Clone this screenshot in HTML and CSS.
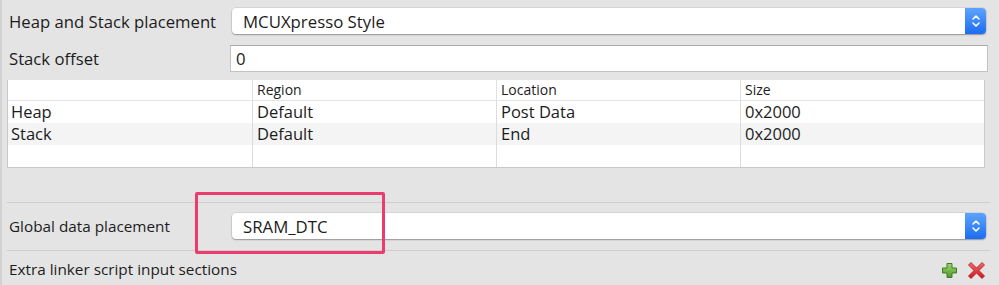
FILE: index.html
```html
<!DOCTYPE html>
<html>
<head>
<meta charset="utf-8">
<link rel="stylesheet" href="styles.css">
</head>
<body>
<div class="panel">
  <div class="row row-combo">
    <div class="label">Heap and Stack placement</div>
    <div class="combo">
      <span class="combo-text">MCUXpresso Style</span>
      <span class="stepper"><svg width="10" height="16" viewBox="0 0 10 16"><path d="M2 6 L5 3 L8 6 M2 10 L5 13 L8 10" fill="none" stroke="#fff" stroke-width="1.6" stroke-linecap="round" stroke-linejoin="round"/></svg></span>
    </div>
  </div>
  <div class="row row-field">
    <div class="label">Stack offset</div>
    <div class="field">0</div>
  </div>
  <div class="table">
    <div class="tr th">
      <div class="td"></div><div class="td">Region</div><div class="td">Location</div><div class="td">Size</div>
    </div>
    <div class="tr">
      <div class="td">Heap</div><div class="td">Default</div><div class="td">Post Data</div><div class="td">0x2000</div>
    </div>
    <div class="tr alt">
      <div class="td">Stack</div><div class="td">Default</div><div class="td">End</div><div class="td">0x2000</div>
    </div>
    <div class="tr">
      <div class="td"></div><div class="td"></div><div class="td"></div><div class="td"></div>
    </div>
  </div>
  <div class="sep sep-first"></div>
  <div class="row row-global">
    <div class="label small">Global data placement</div>
    <div class="combo">
      <span class="combo-text">SRAM_DTC</span>
      <span class="stepper"><svg width="10" height="16" viewBox="0 0 10 16"><path d="M2 6 L5 3 L8 6 M2 10 L5 13 L8 10" fill="none" stroke="#fff" stroke-width="1.6" stroke-linecap="round" stroke-linejoin="round"/></svg></span>
    </div>
    <div class="highlight"></div>
  </div>
  <div class="sep sep-second"></div>
  <div class="row row-extra">
    <div class="label small">Extra linker script input sections</div>
    <div class="icons">
      <svg class="ico" width="17" height="17" viewBox="0 0 17 17">
        <defs><linearGradient id="gp" x1="0" y1="0" x2="0" y2="1"><stop offset="0" stop-color="#9fd36a"/><stop offset="1" stop-color="#4d9a2a"/></linearGradient></defs>
        <path d="M6 1.5 H11 V6 H15.5 V11 H11 V15.5 H6 V11 H1.5 V6 H6 Z" fill="url(#gp)" stroke="#3f7d24" stroke-width="1"/>
      </svg>
      <svg class="ico" width="19" height="19" viewBox="0 0 19 19">
        <defs><linearGradient id="gx" x1="0" y1="0" x2="0" y2="1"><stop offset="0" stop-color="#f36a6a"/><stop offset="1" stop-color="#c8191e"/></linearGradient></defs>
        <path d="M4 1.5 L9.5 7 L15 1.5 L17.5 4 L12 9.5 L17.5 15 L15 17.5 L9.5 12 L4 17.5 L1.5 15 L7 9.5 L1.5 4 Z" fill="url(#gx)" stroke="#b3161b" stroke-width="0.8" stroke-linejoin="round"/>
      </svg>
    </div>
  </div>
</div>
</body>
</html>
```

FILE: styles.css
```css
* { box-sizing: border-box; }
html, body { margin: 0; padding: 0; }
body {
  width: 999px;
  height: 285px;
  overflow: hidden;
  background: #e4e4e4;
  font-family: "Open Sans", "Liberation Sans", Arial, sans-serif;
  color: #1c1c1c;
}
.panel {
  position: relative;
  height: 285px;
  padding-top: 8px;
  border-left: 2px solid #d2d2d2;
}
.row {
  display: flex;
  align-items: center;
  position: relative;
}
.label {
  padding-left: 7px;
  font-size: 16.7px;
  flex: none;
  white-space: nowrap;
}
.label.small { font-size: 15.3px; }
.row-combo { height: 27px; }
.combo {
  position: absolute;
  left: 230px;
  top: 0;
  width: 754px;
  height: 26px;
  background: #fff;
  border-radius: 4px;
  box-shadow: 0 0 0 0.5px rgba(0,0,0,0.12), 0 1px 1.5px rgba(0,0,0,0.3);
  display: flex;
  align-items: center;
}
.combo-text {
  padding-left: 11px;
  font-size: 16.8px;
  flex: 1;
}
.stepper {
  width: 21px;
  height: 26px;
  border-radius: 0 4px 4px 0;
  background: linear-gradient(#5ea4fd, #1a6cf4);
  display: flex;
  align-items: center;
  justify-content: center;
}
.row-field {
  margin-top: 10px;
  height: 27px;
}
.field {
  position: absolute;
  left: 228px;
  top: 0;
  width: 758px;
  height: 27px;
  background: #fff;
  border: 1px solid #c2c2c2;
  border-top-color: #a9a9a9;
  font-size: 16.7px;
  padding-left: 5px;
  line-height: 25px;
}
.table {
  margin-top: 8px;
  margin-left: 5px;
  width: 978px;
  height: 88px;
  background: #fff;
  border: 1px solid #c9c9c9;
  border-top: none;
}
.tr {
  display: grid;
  grid-template-columns: 244px 244px 244px 1fr;
  height: 22px;
  font-size: 16.5px;
  line-height: 22px;
}
.tr.th {
  height: 21px;
  font-size: 14px;
  line-height: 19px;
  border-bottom: 1px solid #e3e3e3;
}
.tr.alt { background: #f4f4f4; }
.td {
  padding-left: 4px;
  border-left: 1px solid #dcdcdc;
  white-space: nowrap;
}
.td:first-child { border-left: none; padding-left: 3px; }
.th .td { border-left-color: #e0e0e0; }
.sep {
  margin-left: 5px;
  width: 983px;
  height: 1px;
  background: #cdcdcd;
}
.sep-first { margin-top: 34px; }
.row-global {
  margin-top: 10px;
  height: 37px;
  align-items: flex-start;
}
.row-global .label { line-height: 26px; }
.row-global .combo { left: 230px; width: 754px; }
.highlight {
  position: absolute;
  left: 193px;
  top: -21px;
  width: 190px;
  height: 62px;
  border: 3px solid #ec3b6e;
  border-radius: 2px;
}
.row-extra {
  height: 35px;
  justify-content: space-between;
}
.icons {
  display: flex;
  align-items: center;
  gap: 9px;
  margin-right: 13px;
  margin-top: 4px;
}
```
